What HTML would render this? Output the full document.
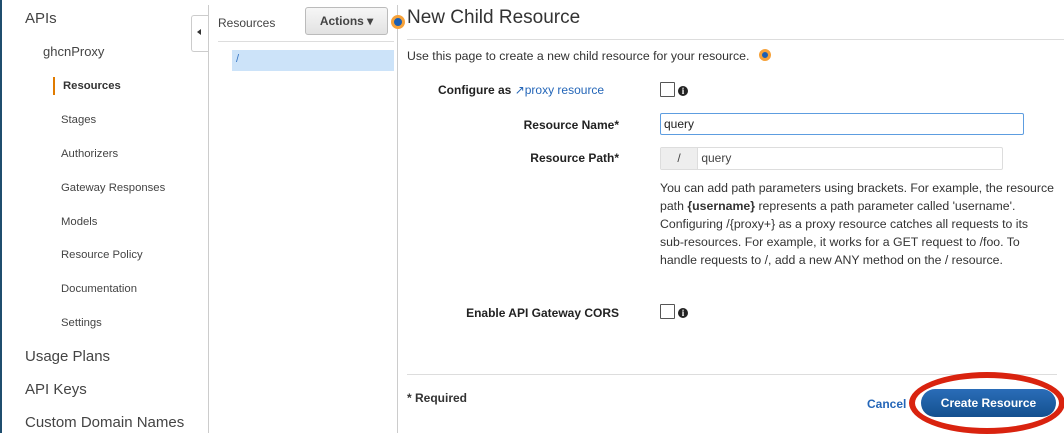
<!DOCTYPE html>
<html><head><style>
body{margin:0;width:1064px;height:433px;overflow:hidden;background:#fff;font-family:"Liberation Sans",sans-serif;color:#333;position:relative}
.a{position:absolute;white-space:nowrap}
.nav{font-size:11.3px;color:#444}
.lbl{font-size:12px;font-weight:bold;color:#222;text-align:right;width:220px}
.cb{position:absolute;width:13px;height:13px;border:1px solid #555;background:#fff;border-radius:1px}
.info{position:absolute;width:10px;height:10px;border-radius:50%;background:#222;color:#fff;font-size:9px;font-weight:bold;text-align:center;line-height:10px;font-family:"Liberation Serif",serif}
.dot{position:absolute;width:8px;height:8px;border-radius:50%;background:#1a5fb4;border:3px solid #f6a23a;}
</style></head><body>
<div class="a" style="left:0;top:0;width:2px;height:433px;background:#1f4e6e"></div>
<div class="a" style="left:25px;top:10px;font-size:15px;color:#444">APIs</div>
<div class="a" style="left:43px;top:44px;font-size:13px;color:#444">ghcnProxy</div>
<div class="a" style="left:53px;top:77px;width:2px;height:18px;background:#e07b00"></div>
<div class="a nav" style="left:63px;top:80px;font-weight:bold;color:#333">Resources</div>
<div class="a nav" style="left:61px;top:114px">Stages</div>
<div class="a nav" style="left:61px;top:148px">Authorizers</div>
<div class="a nav" style="left:61px;top:182px">Gateway Responses</div>
<div class="a nav" style="left:61px;top:216px">Models</div>
<div class="a nav" style="left:61px;top:249px">Resource Policy</div>
<div class="a nav" style="left:61px;top:283px">Documentation</div>
<div class="a nav" style="left:61px;top:317px">Settings</div>
<div class="a" style="left:25px;top:348px;font-size:15px;color:#444">Usage Plans</div>
<div class="a" style="left:25px;top:381px;font-size:15px;color:#444">API Keys</div>
<div class="a" style="left:25px;top:414px;font-size:15px;color:#444">Custom Domain Names</div>

<div class="a" style="left:191px;top:15px;width:17px;height:35px;border:1px solid #ccc;border-right:none;background:#fff;border-radius:3px 0 0 3px"></div>
<div class="a" style="left:197px;top:29px;width:0;height:0;border-top:3px solid transparent;border-bottom:3px solid transparent;border-right:4px solid #333"></div>
<div class="a" style="left:208px;top:5px;width:1px;height:428px;background:#ccc"></div>
<div class="a" style="left:218px;top:16px;font-size:12px;color:#444">Resources</div>
<div class="a" style="left:305px;top:7px;width:81px;height:26px;border:1px solid #bbb;border-radius:3px;background:linear-gradient(#f6f6f6,#e2e2e2);font-size:12px;font-weight:bold;color:#444;line-height:26px;text-align:center">Actions ▾</div>
<div class="a" style="left:218px;top:41px;width:176px;height:1px;background:#ddd"></div>
<div class="a" style="left:232px;top:50px;width:162px;height:21px;background:#cce3f9;font-size:11px;color:#3876c4;line-height:18px;padding-left:4px;box-sizing:border-box">/</div>
<div class="a" style="left:397px;top:5px;width:1px;height:428px;background:#ccc"></div>
<div class="dot" style="left:391px;top:15px"></div>

<div class="a" style="left:407px;top:7px;font-size:19px;color:#333">New Child Resource</div>
<div class="a" style="left:407px;top:39px;width:657px;height:1px;background:#ddd"></div>
<div class="a" style="left:407px;top:49px;font-size:12.3px;color:#333">Use this page to create a new child resource for your resource.</div>
<div class="dot" style="left:759px;top:49px;width:6px;height:6px"></div>

<div class="a" style="left:438px;top:83px;font-size:12px;font-weight:bold;color:#222">Configure as <span style="font-weight:normal;color:#2466b8">↗proxy resource</span></div>
<div class="cb" style="left:660px;top:82px"></div><div class="info" style="left:678px;top:86px">i</div>
<div class="a lbl" style="left:399px;top:118px">Resource Name*</div>
<div class="a" style="left:660px;top:113px;width:359px;height:20px;border:1px solid #5d9de0;border-radius:2px;font-size:12px;line-height:20px;padding-left:3px;color:#222">query</div>
<div class="a lbl" style="left:399px;top:151px">Resource Path*</div>
<div class="a" style="left:660px;top:147px;width:341px;height:21px;border:1px solid #ddd;border-radius:2px;font-size:12px;line-height:21px;color:#444"><span style="display:inline-block;width:36px;background:#eee;text-align:center;border-right:1px solid #ddd">/</span> query</div>
<div class="a" style="left:660px;top:179px;font-size:12.3px;line-height:18px;color:#333">You can add path parameters using brackets. For example, the resource<br>path <b>{username}</b> represents a path parameter called 'username'.<br>Configuring /{proxy+} as a proxy resource catches all requests to its<br>sub-resources. For example, it works for a GET request to /foo. To<br>handle requests to /, add a new ANY method on the / resource.</div>
<div class="a lbl" style="left:399px;top:306px">Enable API Gateway CORS</div>
<div class="cb" style="left:660px;top:304px"></div><div class="info" style="left:678px;top:308px">i</div>
<div class="a" style="left:407px;top:374px;width:650px;height:1px;background:#ddd"></div>
<div class="a" style="left:407px;top:391px;font-size:12px;font-weight:bold;color:#333">* Required</div>
<div class="a" style="left:867px;top:397px;font-size:12px;font-weight:bold;color:#2466b8">Cancel</div>
<div class="a" style="left:921px;top:389px;width:135px;height:28px;border-radius:14px;background:linear-gradient(#2a6db8,#14508f);color:#fff;font-size:12px;font-weight:bold;line-height:28px;text-align:center">Create Resource</div>
<div class="a" style="left:909px;top:372px;width:156px;height:62px;border:6px solid #d9230f;border-radius:50%;box-sizing:border-box"></div>
</body></html>
